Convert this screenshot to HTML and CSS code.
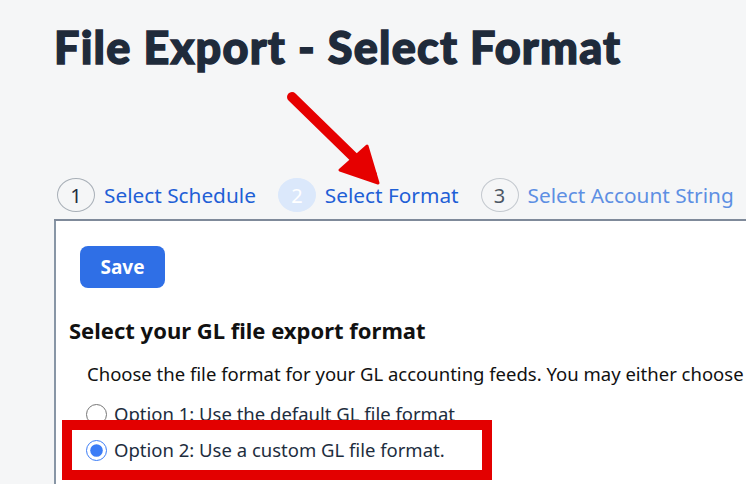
FILE: index.html
```html
<html lang="en">
<head>
  <meta charset="UTF-8" />
  <title>File Export - Select Format</title>
  <link rel="stylesheet" href="styles.css">
</head>
<body>
  <div class="page">
    <h1 class="page-title">File Export - Select Format</h1>

    <ul class="steps">
      <li class="step step-done">
        <span class="step-num">1</span>
        <span class="step-label">Select Schedule</span>
      </li>
      <li class="step step-current">
        <span class="step-num">2</span>
        <span class="step-label">Select Format</span>
      </li>
      <li class="step step-next">
        <span class="step-num">3</span>
        <span class="step-label">Select Account String</span>
      </li>
    </ul>

    <div class="panel">
      <button class="btn-save">Save</button>
      <h2 class="section-title">Select your GL file export format</h2>
      <p class="intro">Choose the file format for your GL accounting feeds. You may either choose</p>

      <label class="option">
        <input type="radio" name="format" value="default" />
        <span>Option 1: Use the default GL file format</span>
      </label>
      <label class="option">
        <input type="radio" name="format" value="custom" checked />
        <span>Option 2: Use a custom GL file format.</span>
      </label>
    </div>
  </div>

  <!-- annotation layer -->
  <svg class="arrow" width="746" height="484" viewBox="0 0 746 484">
    <line x1="292" y1="97" x2="372" y2="175" stroke="#e60000" stroke-width="10" stroke-linecap="round" />
    <polygon points="378,183 340,170 367,146" fill="#e60000" stroke="#e60000" stroke-width="3" stroke-linejoin="round" />
  </svg>
  <div class="highlight"></div>
</body>
</html>
```

FILE: styles.css
```css
* {
  box-sizing: border-box;
}

body {
  margin: 0;
  padding: 0;
  background-color: #f5f6f7;
  font-family: "Noto Sans", Arial, sans-serif;
  color: #1d2d3e;
  height: 484px;
  overflow: hidden;
}

.page {
  padding: 20px 0 0 54px;
}

.page-title {
  margin: 0;
  font-family: Lato, "Noto Sans", sans-serif;
  font-weight: 900;
  font-size: 45px;
  line-height: 54px;
  color: #1f2b3b;
  letter-spacing: 1.2px;
  -webkit-text-stroke: 1.4px #1f2b3b;
}

.steps {
  list-style: none;
  margin: 104px 0 0 0;
  padding: 0 0 7px 3px;
  display: flex;
  gap: 22px;
  border-bottom: 2px solid #7f8a9a;
}

.step {
  display: flex;
  align-items: center;
  gap: 9px;
}

.step-num {
  width: 38px;
  height: 34px;
  border-radius: 50%;
  display: flex;
  align-items: center;
  justify-content: center;
  font-size: 20px;
  border: 1px solid #a9b0b8;
  color: #1d2d3e;
}

.step-label {
  font-size: 20.8px;
  color: #1f5fd6;
}

.step-current .step-num {
  border-color: #dbe8fb;
  background: #dbe8fb;
  color: #fff;
}

.step-next .step-num {
  color: #4c5664;
  border-color: #c4c9cf;
}

.step-next .step-label {
  color: #5d8fe3;
}

.panel {
  background: #fff;
  border-left: 2px solid #8896a6;
  height: 265px;
  padding: 25px 0 0 24px;
}

.btn-save {
  display: block;
  width: 85px;
  height: 42px;
  border: none;
  border-radius: 8px;
  background: #2f6fe6;
  color: #fff;
  font-family: "Noto Sans", Arial, sans-serif;
  font-weight: 700;
  font-size: 19px;
}

.section-title {
  margin: 27px 0 0 -11px;
  font-size: 22px;
  line-height: 30px;
  font-weight: 700;
  color: #111;
}

.intro {
  margin: 16px 0 0 7px;
  font-size: 18.5px;
  line-height: 26px;
  color: #111;
  white-space: nowrap;
}

.option {
  display: flex;
  align-items: center;
  gap: 7px;
  margin: 14px 0 0 6px;
  font-size: 18.5px;
  line-height: 26px;
  color: #1d2d3e;
}

.option + .option {
  margin-top: 10px;
}

.option input {
  margin: 0;
  width: 21px;
  height: 21px;
  accent-color: #3b7cf6;
}

.arrow {
  position: absolute;
  left: 0;
  top: 0;
  pointer-events: none;
}

.highlight {
  position: absolute;
  left: 62px;
  top: 420px;
  width: 430px;
  height: 60px;
  border: 10px solid #e30000;
  pointer-events: none;
}
```
